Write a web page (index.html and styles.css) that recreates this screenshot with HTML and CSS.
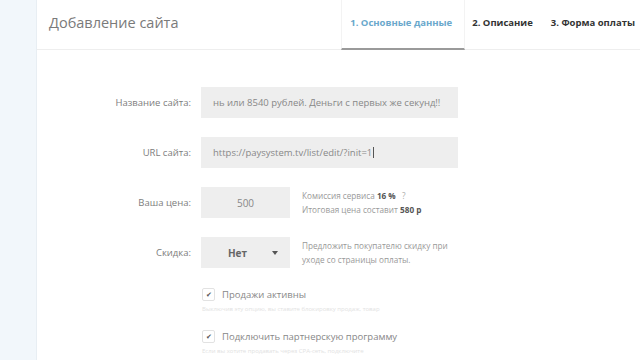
FILE: index.html
```html
<!DOCTYPE html>
<html lang="ru">
<head>
<meta charset="utf-8">
<link rel="stylesheet" href="styles.css">
</head>
<body>
<div class="page">
  <aside class="sidebar"></aside>
  <main class="panel">
    <header class="head">
      <h1 class="title">Добавление сайта</h1>
      <nav class="tabs">
        <div class="tab active">1. Основные данные</div>
        <div class="tab">2. Описание</div>
        <div class="tab">3. Форма оплаты</div>
      </nav>
    </header>
    <form class="form">
      <div class="row">
        <label class="label">Название сайта:</label>
        <div class="field wide">нь или 8540 рублей. Деньги с первых же секунд!!</div>
      </div>
      <div class="row">
        <label class="label">URL сайта:</label>
        <div class="field wide">https://paysystem.tv/list/edit/?init=1<span class="caret"></span></div>
      </div>
      <div class="row">
        <label class="label">Ваша цена:</label>
        <div class="field small center">500</div>
        <div class="note">Комиссия сервиса <b>16 %</b> <span class="q">?</span><br>Итоговая цена составит <b>580 р</b></div>
      </div>
      <div class="row">
        <label class="label">Скидка:</label>
        <div class="field small select"><span class="sel-val">Нет</span><span class="arrow"></span></div>
        <div class="note">Предложить покупателю скидку при<br>уходе со страницы оплаты.</div>
      </div>
      <div class="check-block first">
        <div class="check-row"><span class="box">✔</span><span class="check-label">Продажи активны</span></div>
        <div class="hint">Выключив эту опцию, вы ставите блокировку продаж, товар</div>
      </div>
      <div class="check-block">
        <div class="check-row"><span class="box">✔</span><span class="check-label">Подключить партнерскую программу</span></div>
        <div class="hint">Если вы хотите продавать через CPA-сеть, подключите</div>
      </div>
    </form>
  </main>
</div>
</body>
</html>
```
FILE: styles.css
```css
* { box-sizing: border-box; }
html, body { margin: 0; padding: 0; }
body {
  width: 640px;
  height: 360px;
  overflow: hidden;
  background: #fff;
  font-family: "Open Sans", "Liberation Sans", sans-serif;
  color: #777;
}
.page { display: flex; height: 360px; }
.sidebar {
  width: 37px;
  flex: none;
  background: #f2f7fb;
  border-right: 1px solid #e8eef3;
}
.panel { flex: 1; min-width: 0; background: #fff; }
.head {
  height: 50px;
  display: flex;
  align-items: stretch;
  border-bottom: 1px solid #eeeeee;
}
.title {
  margin: 0;
  padding-left: 12px;
  font-size: 14.5px;
  font-weight: 400;
  color: #7a7a7a;
  line-height: 46px;
  flex: 1;
}
.tabs { display: flex; align-items: stretch; padding-right: 5px; }
.tab {
  font-size: 9.5px;
  font-weight: 700;
  color: #333;
  line-height: 46px;
  white-space: nowrap;
  padding: 0 10px 0 7px;
}
.tab.active {
  color: #6aa8cc;
  width: 124px;
  padding: 0 0 0 8px;
  border-left: 1px solid #f3f3f3;
  border-right: 1px solid #f3f3f3;
  border-bottom: 2px solid #9a9a9a;
  margin-bottom: -1px;
}
.tab:last-child { padding: 0 0 0 8px; }
.form { padding-top: 37px; }
.row {
  display: flex;
  align-items: center;
  margin-bottom: 19px;
  height: 31px;
}
.label {
  width: 154px;
  flex: none;
  text-align: right;
  font-size: 9.5px;
  color: #7d7d7d;
}
.field {
  margin-left: 10px;
  height: 31px;
  background: #eeeeee;
  font-size: 9.5px;
  color: #888;
  display: flex;
  align-items: center;
  white-space: nowrap;
  overflow: hidden;
}
.field.wide { width: 257px; padding-left: 12px; }
.field.small { width: 89px; }
.field.center { justify-content: center; font-size: 10px; color: #888; }
.caret { display: inline-block; width: 1px; height: 11px; background: #555; margin-left: 1px; }
.select { padding: 0 12px 0 0; justify-content: flex-end; }
.sel-val { font-weight: 700; color: #666; font-size: 10px; margin-right: 25px; }
.arrow {
  width: 0; height: 0;
  border-left: 3.5px solid transparent;
  border-right: 3.5px solid transparent;
  border-top: 4px solid #555;
}
.note {
  margin-left: 12px;
  font-size: 8.2px;
  line-height: 14px;
  color: #999;
}
.note b { color: #555; }
.q { color: #aaa; margin-left: 4px; }
.check-block { margin-left: 165px; }
.check-block.first { margin-top: 20px; margin-bottom: 17px; }
.check-row { display: flex; align-items: center; height: 13px; }
.box {
  width: 13px; height: 13px;
  border: 1px solid #e2e2e2;
  border-radius: 2px;
  font-size: 7px;
  color: #555;
  display: flex; align-items: center; justify-content: center;
}
.check-label { margin-left: 7px; font-size: 9.5px; color: #888; }
.hint {
  margin-top: 4px;
  font-size: 6px;
  line-height: 8px;
  color: #e2e2e2;
  white-space: nowrap;
}
```
